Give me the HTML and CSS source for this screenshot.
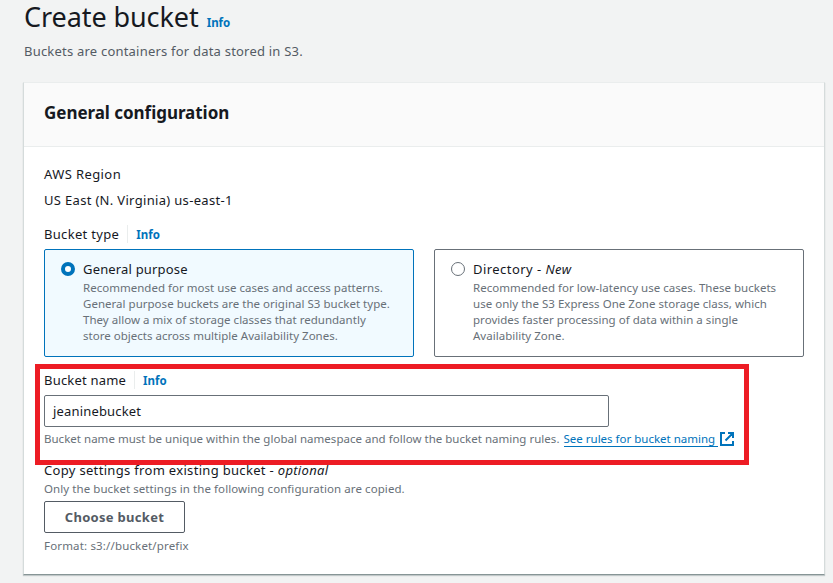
FILE: index.html
```html
<!DOCTYPE html>
<html lang="en">
<head>
<meta charset="utf-8">
<title>Create bucket</title>
<link rel="stylesheet" href="styles.css">
</head>
<body>
<main class="page">
  <header class="page-header">
    <h1><span class="title">Create bucket</span><a class="info">Info</a></h1>
    <p class="lead"><span>Buckets are containers for data stored in S3.</span></p>
  </header>
  <section class="card">
    <div class="card-header"><h2>General configuration</h2></div>
    <div class="card-body">
      <div class="field">
        <div class="label region-label">AWS Region</div>
        <div class="label region-value">US East (N. Virginia) us-east-1</div>
      </div>
      <div class="field">
        <div class="label"><span class="type-label">Bucket type</span><a class="info divided">Info</a></div>
        <div class="tiles">
          <label class="tile selected">
            <span class="radio"></span>
            <span class="tile-text">
              <span class="tile-title">General purpose</span>
              <span class="small">Recommended for most use cases and access patterns.<br>General purpose buckets are the original S3 bucket type.<br>They allow a mix of storage classes that redundantly<br>store objects across multiple Availability Zones.</span>
            </span>
          </label>
          <label class="tile">
            <span class="radio"></span>
            <span class="tile-text">
              <span class="tile-title directory">Directory - <i>New</i></span>
              <span class="small">Recommended for low-latency use cases. These buckets<br>use only the S3 Express One Zone storage class, which<br>provides faster processing of data within a single<br>Availability Zone.</span>
            </span>
          </label>
        </div>
      </div>
      <div class="field bucket-name">
        <div class="label"><span class="name-label">Bucket name</span><a class="info divided">Info</a></div>
        <div class="input">jeaninebucket</div>
        <div class="small hint"><span class="hint-text">Bucket name must be unique within the global namespace and follow the bucket naming rules.</span><a class="link">See rules for bucket naming</a><svg class="external" viewBox="0 0 14 14" width="14" height="14"><path d="M5 1H1v12h12V9M8 1h5v5M13 1 5.5 8.5" fill="none" stroke="currentColor" stroke-width="2"/></svg></div>
      </div>
      <div class="field">
        <div class="label copy-label">Copy settings from existing bucket - <i>optional</i></div>
        <div class="small copy-note">Only the bucket settings in the following configuration are copied.</div>
        <button class="button" type="button">Choose bucket</button>
        <div class="small format">Format: s3://bucket/prefix</div>
      </div>
    </div>
  </section>
</main>
</body>
</html>
```
FILE: styles.css
```css
*, *::after { box-sizing: border-box; }
body {
  margin: 0;
  height: 583px;
  overflow: hidden;
  background: #f2f3f3;
  color: #16191f;
  font-family: "Noto Sans", sans-serif;
  font-size: 13px;
  line-height: 22px;
  white-space: nowrap;
}
h1, h2, p { margin: 0; }
.page { padding: 0 8px 0 23px; }
.page-header { height: 82px; padding-left: 1px; }
h1 { display: flex; align-items: baseline; height: 36px; font-size: 27px; font-weight: 400; line-height: 34px; letter-spacing: -.08px; }
.info { color: #0073bb; font-size: 11.5px; font-weight: 700; line-height: 16px; letter-spacing: 0; }
h1 .info { margin-left: 8px; }
.lead { margin-top: 4px; color: #545b64; letter-spacing: .21px; }
.card {
  height: 493px;
  border: 1px solid #d5dbdb;
  border-top-color: #eaeded;
  border-bottom-color: #879596;
  background: #fff;
  box-shadow: 0 1px 1px rgba(0, 28, 36, .2);
}
.card-header { height: 64px; padding: 19px 20px; background: #fafafa; border-bottom: 1px solid #eaeded; }
h2 { font-size: 17px; font-weight: 700; line-height: 22px; letter-spacing: -.04px; }
.card-body { display: flex; flex-direction: column; gap: 12px; padding: 16px 20px 20px; }
.label { display: flex; align-items: center; height: 22px; white-space: pre; letter-spacing: .32px; }
.region-label { margin-bottom: 4px; letter-spacing: .4px; }
.name-label { letter-spacing: .2px; }
.divided { margin-left: 8px; padding: 2px 0 0 8px; border-left: 1px solid #eaeded; }
.tiles { display: grid; grid-template-columns: 370px 370px; gap: 20px; margin-top: 4px; }
.tile { display: flex; gap: 8px; height: 108px; padding: 9px 16px; border: 1px solid #687078; border-radius: 2px; }
.tile.selected { border-color: #0073bb; background: #f1faff; }
.radio { flex: none; width: 14px; height: 14px; margin-top: 3px; border: 1px solid #687078; border-radius: 50%; background: #fff; }
.selected .radio { border: 4px solid #0073bb; }
.tile-text, .tile-title { display: block; }
.tile-title { height: 21px; line-height: 20px; letter-spacing: .17px; }
.directory { letter-spacing: .45px; }
.small { display: block; color: #687078; font-size: 11.5px; line-height: 16px; letter-spacing: .02px; }
.bucket-name { position: relative; }
.bucket-name::after {
  content: "";
  position: absolute;
  left: -9px;
  top: -5px;
  width: 714px;
  height: 101px;
  border: 5px solid #ed1c24;
}
.input { width: 565px; height: 32px; margin: 4px 0; padding: 4px 8px; border: 1px solid #687078; border-radius: 2px; background: #fff; letter-spacing: .17px; }
.hint { display: flex; height: 16px; }
.link { height: 16px; margin-left: 4px; padding-right: 3px; border-bottom: 1px solid #0073bb; color: #0073bb; letter-spacing: 0; }
.external { margin: 1px 0 0 2px; color: #0073bb; }
.copy-note { letter-spacing: .07px; }
.format { letter-spacing: .16px; }
.button { display: block; width: 141px; height: 32px; margin: 4px 0 5px; padding: 0; border: 1px solid #545b64; border-radius: 2px; background: #fff; color: #545b64; font: 700 13px/22px "Noto Sans", sans-serif; letter-spacing: .3px; }
```
